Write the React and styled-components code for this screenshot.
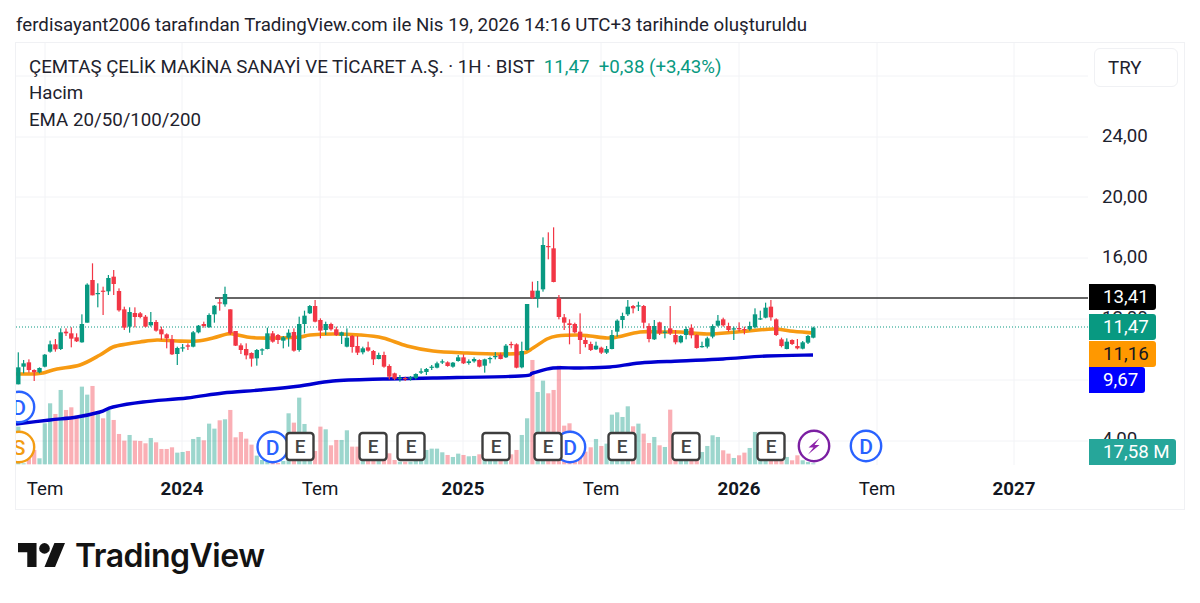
import React from 'react'
import styled, { createGlobalStyle } from 'styled-components'

const GlobalStyle = createGlobalStyle`
  html, body { margin: 0; padding: 0; background: #fff; }
  body { font-family: Roboto, "Liberation Sans", sans-serif; color: #131722; overflow: hidden; }
`

const GREEN = '#089981'
const RED = '#f23645'

// [colour, bodyTop, bodyBottom, wickTop, wickBottom], read off 3x crops
const part1 = [
  ['g',352,403,307,403],['g',340,350,330,370],['r',337,360,328,368],['r',360,367,358,393],['g',354,367,352,370],
  ['g',314,350,312,352],['g',283,305,272,308],['r',283,298,267,305],['g',247,297,235,300],['r',245,250,235,258],
  ['r',250,266,232,292],['r',262,274,250,276],['g',222,277,193,278],['g',104,218,100,218],['r',90,136,40,136],
  ['g',129,131,100,172],['r',122,125,110,195],['g',84,124,75,135],['r',80,102,60,135],['r',123,181,115,185],
  ['r',178,233,170,240],['g',186,230,172,248],['r',189,201,172,232],['r',190,201,186,205],['r',200,230,195,232],
  ['g',216,226,186,230],['r',216,242,210,245],['r',238,253,230,270],['r',253,265,250,295],['r',268,313,255,315],
  ['g',294,312,290,345],['g',292,295,282,305],['r',286,290,280,300],['g',247,290,243,292],['g',227,247,225,250],
  ['r',222,228,215,233],['g',195,232,190,233],['g',167,193,165,218],['r',157,160,145,182],['g',132,163,110,170],
  ['r',178,250,178,255],['r',243,287,243,288],['r',286,300,280,312],['r',297,316,280,328],['r',309,326,307,350],
  ['g',300,325,297,347],['g',298,300,295,315],['g',250,297,233,298],['r',250,275,243,278],['r',255,270,252,282],
  ['g',262,272,258,295],['g',248,263,238,290],['r',246,302,235,305],['g',222,300,200,305],
]
const part2 = [
  ['g',287,312,272,340],['g',258,280,255,282],['r',258,305,240,307],['r',300,332,295,355],['g',312,330,305,345],
  ['r',312,328,308,332],['r',328,345,320,348],['g',337,347,335,372],['g',353,380,325,382],['r',348,381,345,398],
  ['r',378,398,348,405],['g',385,397,380,403],['r',382,392,365,395],['r',393,418,390,435],['g',405,417,398,418],
  ['r',405,440,395,443],['r',438,470,433,478],['r',460,476,458,480],['g',473,477,465,485],['r',474,477,470,483],
  ['g',472,476,468,482],['g',462,474,460,478],['g',454,458,445,462],['g',447,456,444,465],['g',440,442,435,450],
  ['g',430,443,425,445],['g',424,427,418,432],['r',427,438,424,440],['g',428,440,426,443],['g',412,423,405,425],
  ['r',412,430,403,432],['g',424,429,418,434],['g',417,424,412,428],['r',420,440,418,442],['g',418,437,416,458],
  ['g',414,417,410,430],['g',408,410,396,418],['r',404,417,398,418],['g',377,412,372,414],['r',372,375,365,385],
  ['r',373,443,370,445],['g',393,442,365,445],['g',252,390,252,392],['r',212,233,185,237],['g',212,235,183,263],
  ['g',75,208,52,215],['r',78,81,37,118],['r',85,186,22,187],['r',235,291,225,298],['r',292,308,282,330],
  ['r',310,315,298,373],['r',312,337,308,340],
]
const part3 = [
  ['r',155,180,100,222],['r',180,192,172,202],['r',192,210,185,213],['g',197,208,185,210],['r',203,218,200,222],
  ['g',207,218,198,222],['g',165,207,150,208],['g',122,155,118,170],['g',108,120,98,145],['g',80,103,60,108],
  ['r',78,85,75,100],['g',76,79,65,93],['r',78,128,75,145],['r',138,177,130,187],['g',138,178,120,180],
  ['r',127,160,125,165],['g',155,158,138,175],['r',145,160,78,165],['r',165,187,150,193],['g',168,187,165,190],
  ['g',147,165,140,178],['r',143,166,133,175],['r',165,204,163,206],['g',198,200,185,203],['g',175,200,170,205],
  ['g',138,170,133,175],['g',122,137,105,140],['r',118,136,113,140],['r',138,150,128,155],['g',145,147,140,180],
  ['r',144,148,127,155],['r',147,150,140,163],['g',138,148,125,152],['g',103,142,85,145],['g',115,118,92,120],
  ['g',83,113,68,115],['r',80,112,60,122],['r',118,165,115,168],['r',178,198,173,202],['g',185,207,175,208],
  ['r',180,192,178,195],['r',198,205,177,208],['g',187,206,183,208],['g',168,188,165,192],['g',143,173,140,175],
]
const toScreen = (rows, base) =>
  rows.map(([color, top, bottom, wickTop, wickBottom]) => ({
    color: color === 'g' ? GREEN : RED,
    top: base + top / 3,
    bottom: base + bottom / 3,
    wickTop: base + wickTop / 3,
    wickBottom: base + wickBottom / 3,
  }))
const candles = [...toScreen(part1, 250), ...toScreen(part2, 220), ...toScreen(part3, 280)]

const volumes = [
  113,3,18,43,18,123,183,151,223,163,171,146,233,209,235,153,138,163,133,91,71,88,71,70,63,79,66,46,46,51,
  35,37,40,76,82,72,122,107,132,135,163,81,97,77,59,26,13,8,4,4,10,153,125,200,
  121,33,40,113,105,57,73,73,102,53,53,30,30,25,20,25,33,13,8,8,8,12,20,43,47,47,36,28,22,32,28,24,25,30,25,
  20,20,15,25,30,43,88,138,313,217,251,213,223,296,116,123,60,53,38,51,76,
  55,62,149,156,142,174,114,122,92,64,82,57,52,164,60,30,20,15,20,37,55,87,82,42,32,19,27,35,49,97,60,40,30,20,10,22,12,27,12,7,3,
]

const orangeLine = [
  [16,374],[35,374],[43,373],[57,369],[80,365],[100,355],[113,347],[127,344],[140,342],[157,340],[177,341],[197,341],
  [213,338],[227,334],[233,334],[247,337],[260,338],[277,338],[300,337],[310,335],[333,334],[360,335],[383,338],
  [407,346],[433,351],[467,353],[500,354],[523,353],[533,348],[547,339],[557,336],[577,335],[590,336],[607,338],
  [617,337],[640,332],[660,332],[680,332],[707,334],[737,332],[773,329],[790,331],[813,333],
]
const blueLine = [
  [16,424],[50,420],[77,417],[100,412],[113,407],[143,402],[187,398],[223,393],[260,390],[300,386],[333,381],
  [383,379],[433,378],[520,376],[533,373],[553,368],[580,368],[610,367],[640,363],[680,361],[723,359],[767,356],[813,355],
]

// catmull-rom through the points so the averages don't look angular
const smoothPath = (pts) => {
  let d = `M${pts[0][0]} ${pts[0][1]}`
  for (let i = 0; i < pts.length - 1; i++) {
    const p0 = pts[i - 1] || pts[i]
    const p1 = pts[i]
    const p2 = pts[i + 1]
    const p3 = pts[i + 2] || p2
    const c1x = p1[0] + (p2[0] - p0[0]) / 6
    const c1y = p1[1] + (p2[1] - p0[1]) / 6
    const c2x = p2[0] - (p3[0] - p1[0]) / 6
    const c2y = p2[1] - (p3[1] - p1[1]) / 6
    d += ` C${c1x} ${c1y} ${c2x} ${c2y} ${p2[0]} ${p2[1]}`
  }
  return d
}

const gridX = [45, 182, 320, 463, 601, 739, 877, 1014]
const gridY = [76, 137, 197, 258, 319, 380, 441]

const earnings = [300, 373, 411, 496, 548, 622, 686, 771]
const circleMarks = [
  { x: 19, y: 407, label: 'D', color: '#2962ff' },
  { x: 19, y: 447, label: 'S', color: '#f39c12' },
  { x: 272.7, y: 447, label: 'D', color: '#2962ff' },
  { x: 570, y: 447, label: 'D', color: '#2962ff' },
  { x: 866, y: 446, label: 'D', color: '#2962ff' },
]

const scaleTicks = [
  { label: '24,00', y: 136 },
  { label: '20,00', y: 197 },
  { label: '16,00', y: 257 },
  { label: '12,00', y: 318 },
  { label: '8,00', y: 379 },
  { label: '4,00', y: 439 },
]
const priceTags = [
  { label: '13,41', y: 284, w: 67, bg: '#000', fg: '#fff' },
  { label: '11,47', y: 314, w: 67, bg: GREEN, fg: '#fff' },
  { label: '11,16', y: 341, w: 67, bg: '#ff9800', fg: '#131722' },
  { label: '9,67', y: 367, w: 56, bg: '#0000ff', fg: '#fff' },
  { label: '17,58 M', y: 439, w: 87, bg: '#26a69a', fg: '#fff' },
]
const timeTicks = [
  { label: 'Tem', x: 45 },
  { label: '2024', x: 182, year: true },
  { label: 'Tem', x: 320 },
  { label: '2025', x: 463, year: true },
  { label: 'Tem', x: 601 },
  { label: '2026', x: 739, year: true },
  { label: 'Tem', x: 877 },
  { label: '2027', x: 1014, year: true },
]

const Chart = () => (
  <svg width="1072" height="422" viewBox="16 43 1072 422" style={{ display: 'block' }}>
    {gridX.map((x) => <line key={x} x1={x} x2={x} y1="43" y2="465" stroke="#f2f3f6" />)}
    {gridY.map((y) => <line key={y} x1="16" x2="1088" y1={y} y2={y} stroke="#f2f3f6" />)}

    {volumes.map((v, i) => (
      <rect
        key={i}
        x={18.3 + i * 5.3 - 2.1}
        y={464.3 - v / 3}
        width="4.2"
        height={v / 3}
        fill={candles[i].color}
        fillOpacity="0.4"
      />
    ))}

    <line x1="16" x2="1088" y1="327" y2="327" stroke={GREEN} strokeDasharray="1 2" />
    <line x1="215" x2="1088" y1="298" y2="298" stroke="#333" strokeWidth="1.6" />

    <path d={smoothPath(blueLine)} fill="none" stroke="#0000d0" strokeWidth="3.4" />
    <path d={smoothPath(orangeLine)} fill="none" stroke="#f79a12" strokeWidth="3.6" />

    {candles.map((c, i) => {
      const x = 18.3 + i * 5.3
      return (
        <g key={i} fill={c.color} stroke="none">
          <rect x={x - 0.6} y={c.wickTop} width="1.2" height={c.wickBottom - c.wickTop} />
          <rect x={x - 2.2} y={c.top} width="4.4" height={Math.max(c.bottom - c.top, 1.2)} />
        </g>
      )
    })}

    {circleMarks.map((m, i) => (
      <g key={i}>
        <circle cx={m.x} cy={m.y} r="15.2" fill="#fff" stroke={m.color} strokeWidth="2.4" />
        <text x={m.x} y={m.y + 7.5} textAnchor="middle" fontSize="21" fontWeight="500" fill={m.color} fontFamily="Roboto, sans-serif">
          {m.label}
        </text>
      </g>
    ))}

    {earnings.map((x) => (
      <g key={x}>
        <rect x={x - 13.5} y="433" width="27" height="27" rx="3" fill="#fff" stroke="#3d3d3d" strokeWidth="2.4" />
        <text x={x} y="453" textAnchor="middle" fontSize="19" fontWeight="500" fill="#444" fontFamily="Roboto, sans-serif">E</text>
      </g>
    ))}

    <circle cx="814" cy="446" r="15.2" fill="#fff" stroke="#7b1fa2" strokeWidth="2.4" />
    <path d="M819.5 438 L808.5 447.5 L813.5 447.5 L808 454.5 L819.5 445 L814.5 445 Z" fill="#8e24aa" />
  </svg>
)

const App = () => (
  <>
    <GlobalStyle />
    <Page>
      <Caption>ferdisayant2006 tarafından TradingView.com ile Nis 19, 2026 14:16 UTC+3 tarihinde oluşturuldu</Caption>
      <ChartFrame>
        <Plot>
          <Chart />
          <Legend>
            <div>
              ÇEMTAŞ ÇELİK MAKİNA SANAYİ VE TİCARET A.Ş. · 1H · BIST
              <Change>11,47 &nbsp;+0,38 (+3,43%)</Change>
            </div>
            <div>Hacim</div>
            <div>EMA 20/50/100/200</div>
          </Legend>
        </Plot>
        <PriceScale>
          <Currency>TRY</Currency>
          {scaleTicks.map((t) => <ScaleLabel key={t.label} $y={t.y}>{t.label}</ScaleLabel>)}
          {priceTags.map((t) => (
            <PriceTag key={t.label} $y={t.y} $w={t.w} $bg={t.bg} $fg={t.fg}>{t.label}</PriceTag>
          ))}
        </PriceScale>
        <TimeAxis>
          {timeTicks.map((t) => <TimeTick key={t.label + t.x} $x={t.x} $year={t.year}>{t.label}</TimeTick>)}
        </TimeAxis>
      </ChartFrame>
      <LogoRow>
        <svg width="47" height="24" viewBox="0 4 35.5 18" fill="#131313">
          <path d="M14 22H7V11H0V4h14v18zM28 22h-8l7.5-18h8L28 22z" />
          <circle cx="20" cy="8" r="4" />
        </svg>
        <LogoWord>TradingView</LogoWord>
      </LogoRow>
    </Page>
  </>
)

const Page = styled.div`
  width: 1200px;
  height: 603px;
  display: flex;
  flex-direction: column;
  box-sizing: border-box;
  padding: 0 15px;
`

const Caption = styled.div`
  height: 42px;
  line-height: 50px;
  padding-left: 1px;
  font-size: 18.7px;
  color: #1e222d;
  white-space: nowrap;
`

const ChartFrame = styled.div`
  width: 1170px;
  height: 468px;
  box-sizing: border-box;
  border: 1px solid #f0f1f4;
  display: grid;
  grid-template-columns: 1072px 96px;
  grid-template-rows: 422px 44px;
`

const Plot = styled.div`
  grid-column: 1;
  grid-row: 1;
  position: relative;
  overflow: hidden;
`

const Legend = styled.div`
  position: absolute;
  left: 13px;
  top: 10.5px;
  font-size: 18.7px;
  line-height: 26.5px;
  color: #1e222d;
  white-space: nowrap;
`

const Change = styled.span`
  margin-left: 9px;
  color: ${GREEN};
`

const PriceScale = styled.div`
  position: relative;
  grid-column: 2;
  grid-row: 1 / 3;
  font-size: 18.7px;
  line-height: 26px;
`

const Currency = styled.div`
  position: absolute;
  left: 6px;
  top: 5px;
  width: 84px;
  height: 39px;
  box-sizing: border-box;
  border: 1px solid #f0f1f4;
  border-radius: 6px;
  padding-left: 13px;
  line-height: 39px;
  color: #1e222d;
`

const ScaleLabel = styled.div`
  position: absolute;
  left: 14px;
  top: ${(p) => p.$y - 43 - 13}px;
  color: #1e222d;
`

const PriceTag = styled.div`
  position: absolute;
  left: 1px;
  top: ${(p) => p.$y - 43}px;
  width: ${(p) => p.$w}px;
  height: 26px;
  box-sizing: border-box;
  padding-left: 14px;
  border-radius: 0 3px 3px 0;
  background: ${(p) => p.$bg};
  color: ${(p) => p.$fg};
  white-space: nowrap;
`

const TimeAxis = styled.div`
  grid-column: 1;
  grid-row: 2;
  position: relative;
  font-size: 18.7px;
  line-height: 48px;
`

const TimeTick = styled.span`
  position: absolute;
  left: ${(p) => p.$x - 16}px;
  transform: translateX(-50%);
  font-weight: ${(p) => (p.$year ? 700 : 400)};
  color: #131722;
`

const LogoRow = styled.div`
  display: flex;
  align-items: center;
  gap: 10px;
  padding: 33px 0 0 3px;
  height: 24px;
`

const LogoWord = styled.span`
  font-family: Inter, Roboto, sans-serif;
  font-size: 32px;
  font-weight: 600;
  letter-spacing: -0.5px;
  color: #131313;
`

export default App
